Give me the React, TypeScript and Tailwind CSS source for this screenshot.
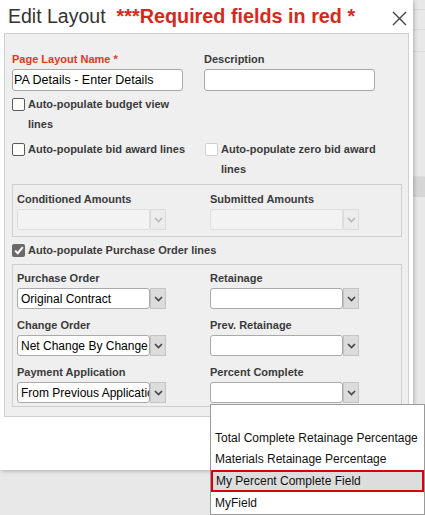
import React from "react";

const LBL = "text-[11px] font-bold text-[#3b3b3b] leading-[14px]";

function Arrow({ disabled }: { disabled?: boolean }) {
  return (
    <div
      className={`w-[16px] h-[21px] flex items-center justify-center border ${
        disabled ? "bg-[#ececec] border-[#dcdcdc]" : "bg-[#dcdcdc] border-[#c4c4c4]"
      }`}
    >
      <svg width="9" height="6" viewBox="0 0 9 6">
        <path
          d="M1 1 L4.5 4.5 L8 1"
          fill="none"
          stroke={disabled ? "#b8b8b8" : "#444"}
          strokeWidth="1.6"
        />
      </svg>
    </div>
  );
}

function Select({ value, disabled }: { value?: string; disabled?: boolean }) {
  return (
    <div className="flex items-stretch h-[21px]">
      <div
        className={`w-[133px] rounded-[3px] border flex items-center px-[3px] overflow-hidden whitespace-nowrap text-[12px] text-black ${
          disabled ? "bg-[#f3f3f3] border-[#dedede]" : "bg-white border-[#a9a9a9]"
        }`}
        style={{ fontFamily: '"Liberation Sans", Arial, sans-serif' }}
      >
        {value}
      </div>
      <Arrow disabled={disabled} />
    </div>
  );
}

function Check({ checked, disabled }: { checked?: boolean; disabled?: boolean }) {
  if (checked)
    return (
      <div className="w-[13px] h-[13px] rounded-[2px] bg-[#6a6a6a] flex items-center justify-center shrink-0">
        <svg width="10" height="9" viewBox="0 0 10 9">
          <path d="M1.2 4.6 L3.8 7.2 L8.8 1.2" fill="none" stroke="#fff" strokeWidth="2" />
        </svg>
      </div>
    );
  return (
    <div
      className={`w-[13px] h-[13px] rounded-[2px] border bg-white shrink-0 ${
        disabled ? "border-[#cfcfcf] bg-[#f4f4f4]" : "border-[#5a5a5a]"
      }`}
    />
  );
}

function CheckRow({
  label,
  checked,
  disabled,
  w,
}: {
  label: string;
  checked?: boolean;
  disabled?: boolean;
  w: string;
}) {
  return (
    <div className="flex items-start gap-[3px]">
      <div className="pt-[4px]">
        <Check checked={checked} disabled={disabled} />
      </div>
      <div className={`text-[11px] font-bold text-[#3b3b3b] leading-[20px] ${w}`}>{label}</div>
    </div>
  );
}

function Field({ label, value, disabled }: { label: string; value?: string; disabled?: boolean }) {
  return (
    <div className="flex flex-col gap-[3px]">
      <div className={LBL}>{label}</div>
      <Select value={value} disabled={disabled} />
    </div>
  );
}

export default function App() {
  return (
    <div
      className="relative w-[425px] h-[515px] bg-[#e8e8e8] overflow-hidden"
      style={{ fontFamily: '"Liberation Sans", Arial, sans-serif' }}
    >
      {/* faint grid lines behind */}
      <div className="absolute right-0 top-0 w-[14px] h-[515px] flex flex-col">
        <div className="h-[10px] border-b border-[#dcdcdc]" />
        <div className="h-[20px] border-b border-[#dcdcdc]" />
        <div className="h-[22px] border-b border-[#dcdcdc]" />
        <div className="h-[125px] border-b border-[#dcdcdc]" />
        <div className="h-[20px] bg-[#d6d6d6]" />
      </div>

      <div className="relative w-[413px] h-[470px] bg-white shadow-[1px_1px_4px_rgba(0,0,0,0.25)] flex flex-col">
        <div className="h-[33px] flex items-center pl-[8px] pr-[4px] pt-[1px]">
          <span className="text-[19.5px] text-[#333] leading-none">Edit Layout</span>
          <span className="ml-[11px] text-[19.8px] font-bold text-[#d7281b] leading-none">
            ***Required fields in red *
          </span>
          <div className="ml-auto mr-[2px] mt-[2px]">
            <svg width="15" height="15" viewBox="0 0 15 15">
              <path d="M1 1 L14 14 M14 1 L1 14" stroke="#444" strokeWidth="1.4" />
            </svg>
          </div>
        </div>

        <div className="mx-[4px] h-[384px] border border-[#cfcfcf] bg-[#efefef] flex flex-col pl-[7px] pr-[6px] pt-[18px]">
          <div className="flex">
            <div className="w-[192px] flex flex-col gap-[3px]">
              <div className="text-[11px] font-bold text-[#dd3a1f] leading-[14px]">Page Layout Name *</div>
              <div className="w-[171px] h-[22px] bg-white border border-[#a9a9a9] rounded-[3px] flex items-center px-[1px] text-[12.5px] text-black">
                PA Details - Enter Details
              </div>
            </div>
            <div className="flex flex-col gap-[3px]">
              <div className={LBL}>Description</div>
              <div className="w-[171px] h-[22px] bg-white border border-[#a9a9a9] rounded-[3px]" />
            </div>
          </div>

          <div className="mt-[3px]">
            <CheckRow label="Auto-populate budget view lines" w="w-[160px]" />
          </div>
          <div className="flex mt-[5px]">
            <div className="w-[193px]">
              <CheckRow label="Auto-populate bid award lines" w="w-[175px]" />
            </div>
            <CheckRow label="Auto-populate zero bid award lines" disabled w="w-[170px]" />
          </div>

          <div className="mt-[5px] h-[53px] border border-[#cfcfcf] flex pl-[4px] pt-[7px]">
            <div className="w-[193px]">
              <Field label="Conditioned Amounts" disabled />
            </div>
            <Field label="Submitted Amounts" disabled />
          </div>

          <div className="mt-[6px] flex items-center gap-[3px] h-[14px]">
            <Check checked />
            <span className="text-[11px] font-bold text-[#3b3b3b]">Auto-populate Purchase Order lines</span>
          </div>

          <div className="mt-[7px] h-[143px] border border-[#cfcfcf] grid grid-cols-[193px_1fr] content-start gap-y-[9px] pl-[4px] pt-[6px]">
            <Field label="Purchase Order" value="Original Contract" />
            <Field label="Retainage" />
            <Field label="Change Order" value="Net Change By Change Order" />
            <Field label="Prev. Retainage" />
            <Field label="Payment Application" value="From Previous Application" />
            <Field label="Percent Complete" />
          </div>
        </div>
      </div>

      {/* open dropdown list */}
      <div className="absolute left-[210px] top-[404px] w-[215px] h-[111px] bg-white border border-[#9a9a9a] flex flex-col text-[12px] text-[#111]">
        <div className="h-[22px]" />
        <div className="h-[22px] flex items-center pl-[4px] whitespace-nowrap">Total Complete Retainage Percentage</div>
        <div className="h-[22px] flex items-center pl-[4px] whitespace-nowrap">Materials Retainage Percentage</div>
        <div className="h-[22px] flex items-center pl-[3px] whitespace-nowrap bg-[#dddddd] border-2 border-[#d9000b]">
          My Percent Complete Field
        </div>
        <div className="h-[22px] flex items-center pl-[4px] whitespace-nowrap">MyField</div>
      </div>
    </div>
  );
}
